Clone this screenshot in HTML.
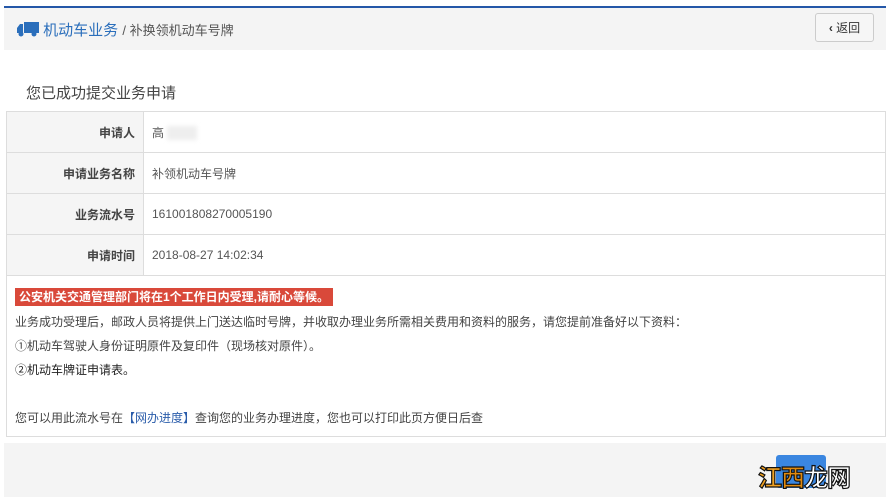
<!DOCTYPE html>
<html><head><meta charset="utf-8"><style>
body{margin:0;width:891px;height:504px;background:#fff;font-family:"Liberation Sans","Microsoft YaHei","Noto Sans CJK SC",sans-serif;position:relative;overflow:hidden;color:#333}
.abs{position:absolute}
.top{left:4px;top:6px;width:882px;height:2px;background:#2457a8}
.hdr{left:4px;top:8px;width:882px;height:42px;background:#f4f4f4}
.bc{left:17px;top:19px;font-size:15px;color:#2a6ebb;white-space:nowrap}
.bc span{color:#555;font-size:13px}
.back{left:815px;top:13px;width:59px;height:29px;border:1px solid #ccc;border-radius:3px;background:#f6f6f6;font-size:12px;line-height:28px;text-align:center;color:#333;box-sizing:border-box}
.title{left:26px;top:82px;font-size:15px;color:#444}
table{position:absolute;left:6px;top:111px;width:880px;border-collapse:collapse;font-size:12px}
td{border:1px solid #ddd;height:40px;padding:0 8px}
td.l{width:120px;background:#f5f5f5;text-align:right;font-weight:bold;color:#444}
td.v{color:#555}
.note{left:6px;top:276px;width:878px;height:160px;border:1px solid #ddd;border-top:none}
.red{left:15px;top:288px;background:#d9493a;color:#fff;font-size:12px;font-weight:bold;padding:1px 4px;height:16px;line-height:16px}
.t{left:15px;font-size:12px;color:#444;white-space:nowrap}
.foot{left:4px;top:443px;width:882px;height:54px;background:#f4f4f4}
.btn{left:776px;top:455px;width:50px;height:33px;background:#3a86e0;border-radius:3px}
.wm{left:758px;top:458px;font-size:24px;font-weight:bold;color:#fff;-webkit-text-stroke:1.2px #111;letter-spacing:-1px}
</style></head><body>
<div class="abs top"></div>
<div class="abs hdr"></div>
<div class="abs bc"><svg width="22" height="16" viewBox="0 0 22 16" style="vertical-align:-2px"><rect x="7" y="1" width="15" height="11" fill="#2a6ebb"/><path d="M0 7 L3 3 H6 V12 H0Z" fill="#2a6ebb"/><circle cx="4" cy="13" r="2.5" fill="#2a6ebb"/><circle cx="17" cy="13" r="2.5" fill="#2a6ebb"/></svg> 机动车业务 <span>/ 补换领机动车号牌</span></div>
<div class="abs back"><b>‹</b> 返回</div>
<div class="abs title">您已成功提交业务申请</div>
<table>
<tr><td class="l">申请人</td><td class="v">高 <span style="display:inline-block;width:30px;height:14px;background:#eee;vertical-align:middle;filter:blur(2px)"></span></td></tr>
<tr><td class="l">申请业务名称</td><td class="v">补领机动车号牌</td></tr>
<tr><td class="l">业务流水号</td><td class="v">161001808270005190</td></tr>
<tr><td class="l">申请时间</td><td class="v">2018-08-27 14:02:34</td></tr>
</table>
<div class="abs note"></div>
<div class="abs red">公安机关交通管理部门将在1个工作日内受理,请耐心等候。</div>
<div class="abs t" style="top:313px">业务成功受理后，邮政人员将提供上门送达临时号牌，并收取办理业务所需相关费用和资料的服务，请您提前准备好以下资料：</div>
<div class="abs t" style="top:337px">①机动车驾驶人身份证明原件及复印件（现场核对原件）。</div>
<div class="abs t" style="top:361px;color:#222">②机动车牌证申请表。</div>
<div class="abs t" style="top:409px">您可以用此流水号在<b style="color:#2a5caa;font-weight:normal">【网办进度】</b>查询您的业务办理进度，您也可以打印此页方便日后查</div>
<div class="abs foot"></div>
<div class="abs btn"></div>
<div class="abs wm"><span style="color:#f0a020">江</span><span style="color:#e08a10">西</span>龙网</div>
</body></html>
